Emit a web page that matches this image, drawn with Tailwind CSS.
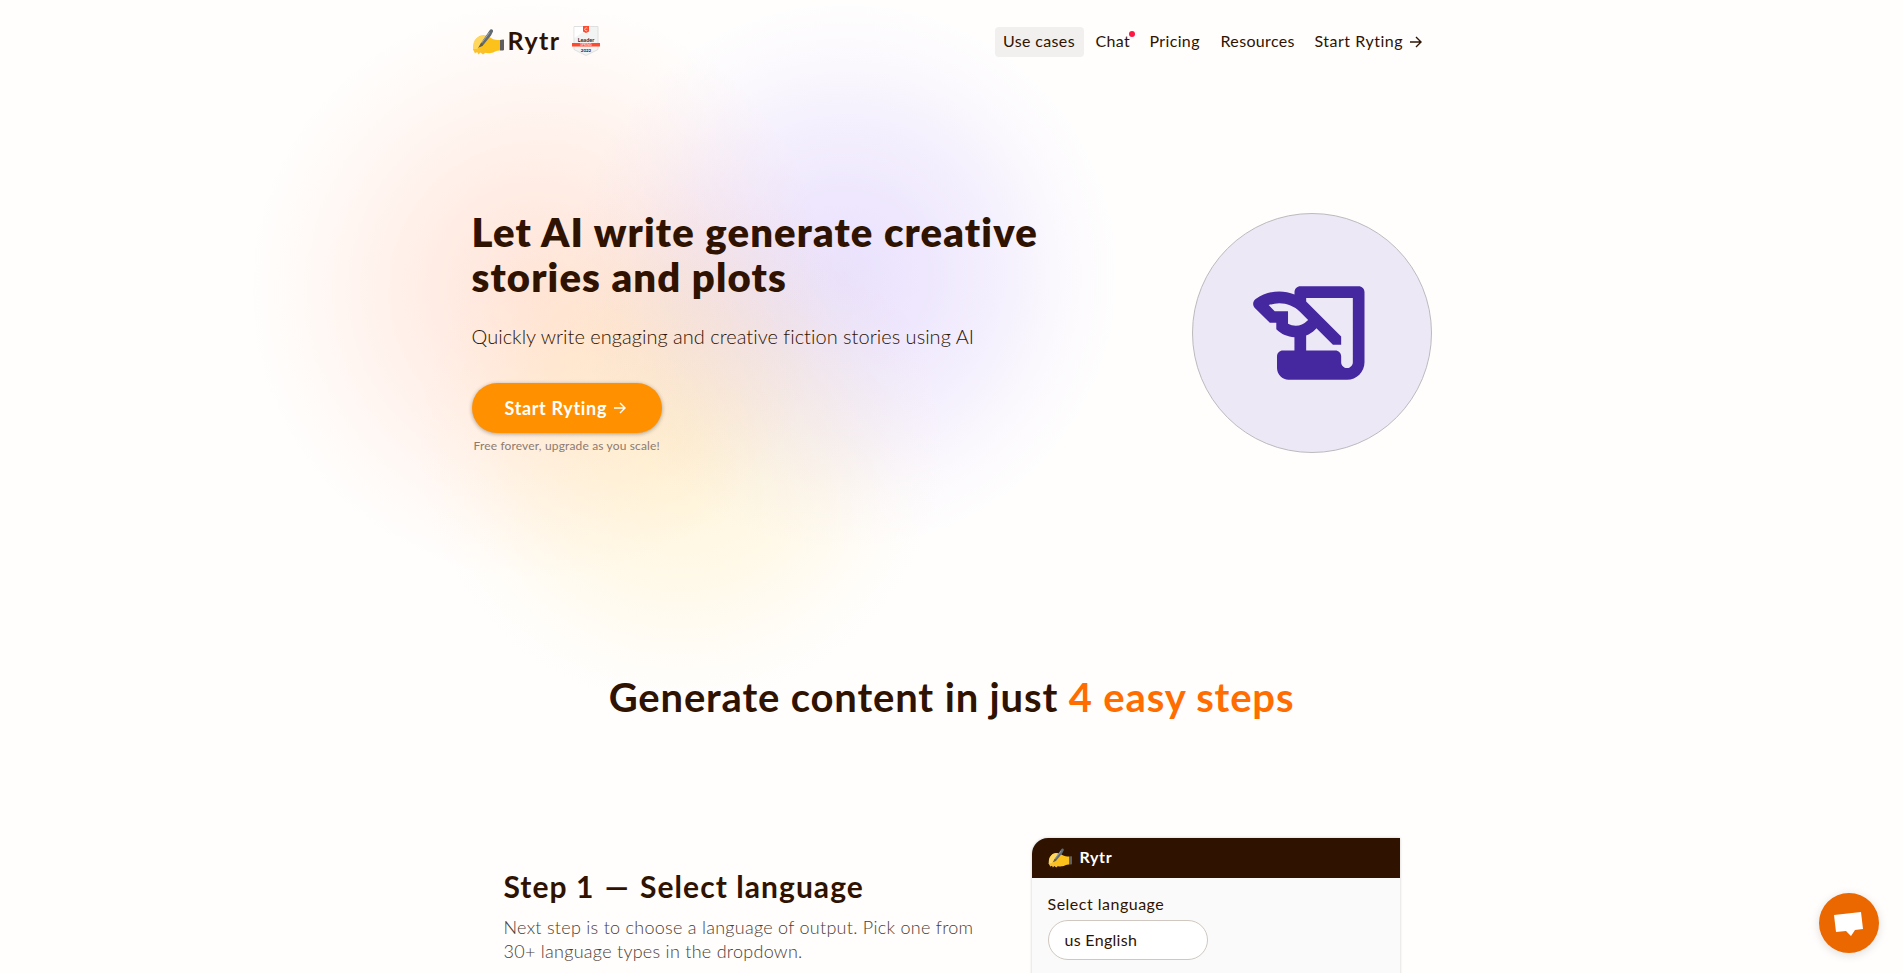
<!DOCTYPE html>
<html lang="en">
<head>
    <meta charset="UTF-8">
    <title>Rytr</title>
    <script src="https://cdn.jsdelivr.net/npm/@tailwindcss/browser@4"></script>
</head>
<body class="relative h-[973px] overflow-hidden bg-[#fffefd] font-['Lato','Noto_Sans',sans-serif] text-[#2f1300]">
    <svg class="hidden">
        <symbol id="hand" viewBox="0 0 32 26">
            <path d="M5 9C9 5 15 6 19 9c3 2 6 2 9 2v10.500c-4 0-6 2-9 2.500-4 .7-7-.5-9-1.500l-6 1-3-3 1-6c0-2 1-4 3-5.500z" fill="#fcc21b"/>
            <path d="M4 10c3-4 8-4 12-2l-7 8-4 4-4 1c0-5 0-8 3-11z" fill="#ffd75e"/>
            <path d="M1 20l2 4.500 2-2 1.500 3 2-2 2.500 2 2-1.500V21z" fill="#fbc02d"/>
            <path d="M28 11l3-.5c1 0 1 .5 1 1v9.500l-1 .6-3-.1z" fill="#615f5e"/>
            <path d="M17.500 1.500c1.500-2.500 4-1 3.500 1l-2 4-8.500 10.500-2.500 1 1-4z" fill="#626b72"/>
            <path d="M17.500 3.500L9.500 14" stroke="#a2a9ae" fill="none"/>
            <path d="M9 14l-3 5 5-3z" fill="#6b5b3c"/>
        </symbol>
        <symbol id="arrow" viewBox="0 0 12 12">
            <path d="M0 6h11M6 1l5 5-5 5" fill="none" stroke="currentColor" stroke-width="1.4"/>
        </symbol>
    </svg>

    <!-- Background glow -->
    <div class="absolute left-[248px] top-0 -z-10 size-[580px] bg-[radial-gradient(circle_closest-side,#ff6d302b_0%,#ff6d3022_28%,#ff6d3015_55%,#ff6d3008_80%,#ff6d3000_100%)]"></div>
    <div class="absolute left-[570px] top-0 -z-10 size-[550px] bg-[radial-gradient(circle_closest-side,#7c4dff29_0%,#7c4dff21_28%,#7c4dff15_55%,#7c4dff07_80%,#7c4dff00_100%)]"></div>
    <div class="absolute left-[415px] top-[180px] -z-10 size-[530px] bg-[radial-gradient(circle_closest-side,#ffc10726_0%,#ffc1071d_28%,#ffc10713_55%,#ffc10706_80%,#ffc10700_100%)]"></div>

    <div class="mx-auto w-[960px]">
        <header class="flex h-[84px] items-center justify-between">
            <div class="flex items-center">
                <svg class="h-[26px] w-8"><use href="#hand"/></svg>
                <span class="ml-1 -mt-0.5 text-[25px] font-bold tracking-[1.4px]">Rytr</span>
                <svg class="ml-[11px] -mt-0.5 h-[30px] w-7" viewBox="0 0 28 30">
                    <path d="M2 .5h24v23L14 29.500 2 23.500z" fill="#f2f3f3" stroke="#dedfe0"/>
                    <path d="M2.500 1H18L2.500 12z" fill="#fff"/>
                    <path d="M11 0h6v5.500l-3 1.500-3-1.500z" fill="#ff492c"/>
                    <path d="M15.300 2.200a1.500 1.500 0 1 0 0 2.200" fill="none" stroke="#fff" stroke-width=".7"/>
                    <text x="14" y="15.500" text-anchor="middle" font-size="5.500" font-weight="700" fill="#252530">Leader</text>
                    <path d="M0 17h28v3.500H0z" fill="#ff492c"/>
                    <text x="14" y="20" text-anchor="middle" font-size="3.200" fill="#fff">SPRING</text>
                    <text x="14" y="26" text-anchor="middle" font-size="4.500" font-weight="700" fill="#252530">2022</text>
                </svg>
            </div>
            <nav class="mr-2.5 flex items-center text-base tracking-[0.35px]">
                <a class="flex h-[30px] w-[89px] items-center justify-center rounded bg-[#f1f0ef] pb-0.5">Use cases</a>
                <a class="relative ml-3 w-[54px] pb-0.5">Chat<i class="absolute left-[33px] top-0.5 size-1.5 rounded-full bg-[#ff1744]"></i></a>
                <a class="w-[71px] pb-0.5">Pricing</a>
                <a class="w-[94px] pb-0.5">Resources</a>
                <a class="flex w-[107px] items-center justify-between pb-0.5 tracking-[0.5px]">Start Ryting <svg class="mt-0.5 size-3"><use href="#arrow"/></svg></a>
            </nav>
        </header>

        <section class="flex justify-between pt-[129px]">
            <div class="-mt-[3px]">
                <h1 class="text-[40px] leading-[45px] font-extrabold tracking-[1.15px]">Let AI write generate creative<br>stories and plots</h1>
                <p class="mt-[21px] text-xl leading-[30px] font-light tracking-[0.02px]">Quickly write engaging and creative fiction stories using AI</p>
                <a class="mt-8 flex h-[50px] w-[190px] items-center gap-[7px] rounded-full bg-[#ff9100] pl-[33px] text-lg font-bold tracking-[0.65px] text-white shadow-[0_1px_4px_#0005]">Start Ryting <svg class="size-3"><use href="#arrow"/></svg></a>
                <p class="mt-1 ml-0.5 text-xs leading-[18px] tracking-[0.15px] text-[#8e7a6f]">Free forever, upgrade as you scale!</p>
            </div>
            <div class="flex size-60 items-center justify-center rounded-full border border-[#bdbabd] bg-[#ede8f6] text-[#4527a0]">
                <svg class="size-[140px]" viewBox="0 0 24 24" fill="currentColor">
                    <path d="M9 5v.38c-.83-.33-1.720-.5-2.610-.5-1.420 0-2.840.43-4.050 1.290-.51.36-.58 1.090-.14 1.530l2.570 2.560h1.110v1.110c.86.86 1.980 1.310 3.110 1.360V15H7c-.55 0-1 .45-1 1v2c0 1.100.9 2 2 2h10c1.660 0 3-1.340 3-3V5c0-.55-.45-1-1-1H10c-.55 0-1 .45-1 1zm-1.110 5.410V8.260H5.610L4.570 7.220a5.070 5.070 0 0 1 1.820-.34c1.340 0 2.590.52 3.540 1.460l1.410 1.410-.2.2a2.700 2.700 0 0 1-1.920.8c-.47 0-.93-.12-1.330-.34zM19 17c0 .55-.45 1-1 1s-1-.45-1-1v-1c0-.55-.45-1-1-1h-5v-2.590c.57-.23 1.100-.57 1.560-1.030l.2-.2L15.590 14H17v-1.410l-6-5.970V6h8v11z"/>
                </svg>
            </div>
        </section>

        <h2 class="mt-[215px] text-center text-[40px] leading-[54px] font-bold tracking-[0.84px]">Generate content in just <span class="text-[#ff6d00]">4 easy steps</span></h2>

        <section class="mt-[114px] flex px-8">
            <div class="w-[528px] pt-[28px]">
                <h3 class="text-3xl leading-10 font-bold tracking-[1.05px]">Step 1 <span class="mx-0.5">—</span> Select language</h3>
                <p class="mt-[9px] text-lg leading-6 font-light tracking-[0.27px] text-[#4d3c32]">Next step is to choose a language of output. Pick one from<br>30+ language types in the dropdown.</p>
            </div>
            <div class="h-40 w-[368px] rounded-tl-2xl bg-[#fafafa] shadow-[0_0_3px_#0003]">
                <div class="flex h-10 items-center rounded-tl-2xl bg-[#2f1300] pl-4 font-bold text-white">
                    <svg class="h-5 w-6"><use href="#hand"/></svg>
                    <span class="ml-2 -mt-0.5 tracking-[0.6px]">Rytr</span>
                </div>
                <div class="px-4 pt-[15px]">
                    <p class="leading-[22px] tracking-[0.5px]">Select language</p>
                    <div class="mt-[5px] flex h-10 w-40 items-center rounded-full border border-[#d0c8c0] bg-white pl-4 tracking-[0.3px]">us English</div>
                </div>
            </div>
        </section>
    </div>

    <a class="absolute right-6 bottom-5 flex size-[60px] items-center justify-center rounded-full bg-[#eb6700] shadow-[0_2px_10px_#0002]">
        <svg class="size-[30px]" viewBox="0 0 30 30"><path d="M0 7l27-3 2 17-8 1-4 6-5-5-10 1z" fill="#fff"/></svg>
    </a>
</body>
</html>
